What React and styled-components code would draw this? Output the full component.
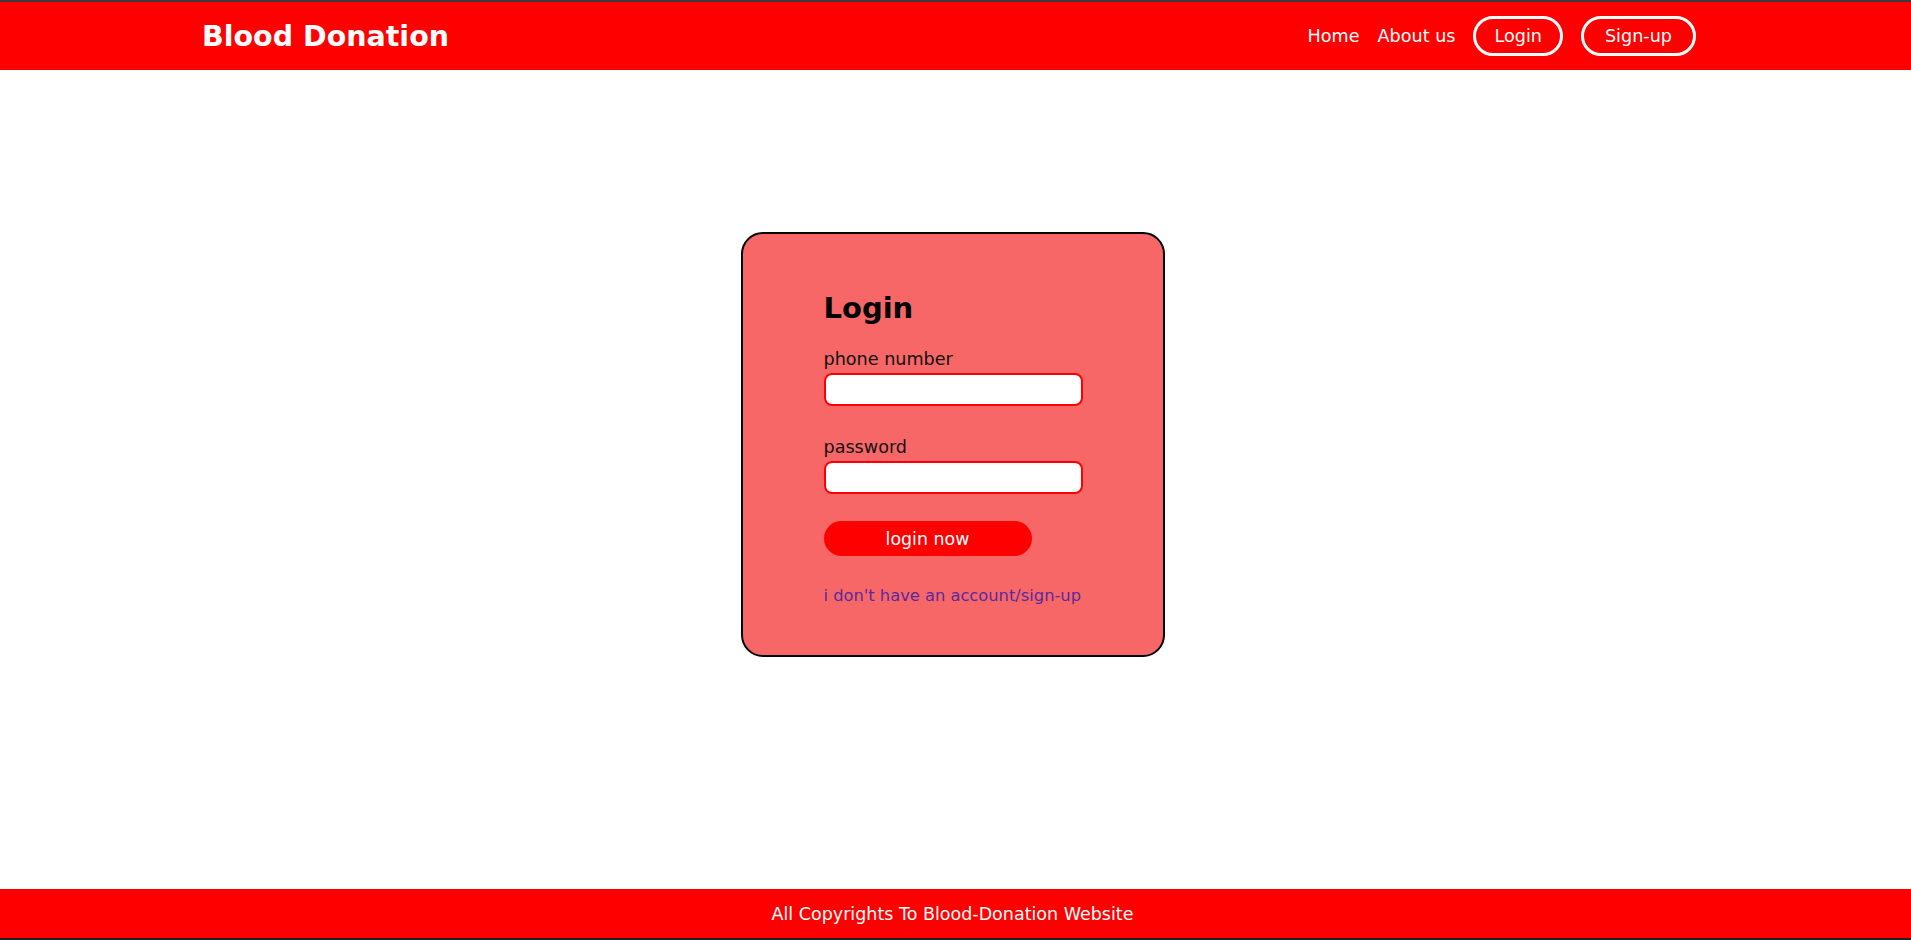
import React from "react";
import styled, { createGlobalStyle } from "styled-components";

const Global = createGlobalStyle`
  * { box-sizing: border-box; }
  html, body { margin: 0; padding: 0; }
  body {
    font-family: "DejaVu Sans", "Noto Sans", sans-serif;
    background: #ffffff;
    color: #000;
  }
`;

const Page = styled.div`
  display: flex;
  flex-direction: column;
  min-height: 940px;
  border-top: 2px solid #3a3a3a;
  border-bottom: 2px solid #1f1f1f;
`;

const Header = styled.header`
  height: 68px;
  background: #ff0000;
  display: flex;
  align-items: center;
  justify-content: space-between;
  padding: 0 215px 0 202px;
`;

const Logo = styled.div`
  color: #fff;
  font-weight: 700;
  font-size: 28.5px;
`;

const Nav = styled.nav`
  display: flex;
  align-items: center;
  gap: 18px;
`;

const NavLink = styled.a`
  color: #fff;
  font-size: 17.6px;
  text-decoration: none;
  cursor: pointer;
`;

const NavButton = styled.a`
  color: #fff;
  font-size: 17.6px;
  height: 40px;
  padding: 0 ${(p) => p.$pad}px;
  border: 3px solid #fff;
  border-radius: 20px;
  display: flex;
  align-items: center;
  text-decoration: none;
  cursor: pointer;
`;

const Main = styled.main`
  flex: 1;
  display: flex;
  justify-content: center;
  align-items: flex-start;
  padding: 162px 6px 0 0;
`;

const Card = styled.form`
  width: 424px;
  height: 425px;
  background: #f76767;
  border: 2px solid #000;
  border-radius: 22px;
  padding: 57px 81px 0 81px;
  display: flex;
  flex-direction: column;
`;

const Title = styled.h1`
  margin: 0 0 24px 0;
  font-size: 29px;
  font-weight: 700;
  line-height: 34px;
`;

const Field = styled.label`
  display: flex;
  flex-direction: column;
  gap: 3px;
  margin-bottom: ${(p) => p.$gap}px;
`;

const LabelText = styled.span`
  font-size: 17.6px;
  line-height: 21px;
  color: #111;
`;

const Input = styled.input`
  width: 259px;
  height: 33px;
  border: 2px solid #ff0000;
  border-radius: 8px;
  background: #fff;
  outline: none;
  font-family: inherit;
  font-size: 15px;
  padding: 0 8px;
`;

const Submit = styled.button`
  width: 208px;
  height: 35px;
  border: none;
  border-radius: 18px;
  background: #ff0000;
  color: #fff;
  font-family: inherit;
  font-size: 17.4px;
  cursor: pointer;
  padding: 0;
  margin-bottom: 30px;
`;

const SignupLink = styled.a`
  color: #5a2a9c;
  font-size: 16.3px;
  line-height: 20px;
  text-decoration: none;
  cursor: pointer;
`;

const Footer = styled.footer`
  height: 49px;
  background: #ff0000;
  color: #fff;
  display: flex;
  align-items: center;
  justify-content: center;
  padding-right: 6px;
  font-size: 17.5px;
`;

export default function App() {
  return (
    <>
      <Global />
      <Page>
        <Header>
          <Logo>Blood Donation</Logo>
          <Nav>
            <NavLink>Home</NavLink>
            <NavLink>About us</NavLink>
            <NavButton $pad={18}>Login</NavButton>
            <NavButton $pad={21}>Sign-up</NavButton>
          </Nav>
        </Header>
        <Main>
          <Card onSubmit={(e) => e.preventDefault()}>
            <Title>Login</Title>
            <Field $gap={31}>
              <LabelText>phone number</LabelText>
              <Input type="text" />
            </Field>
            <Field $gap={27}>
              <LabelText>password</LabelText>
              <Input type="password" />
            </Field>
            <Submit type="submit">login now</Submit>
            <SignupLink>i don't have an account/sign-up</SignupLink>
          </Card>
        </Main>
        <Footer>All Copyrights To Blood-Donation Website</Footer>
      </Page>
    </>
  );
}
